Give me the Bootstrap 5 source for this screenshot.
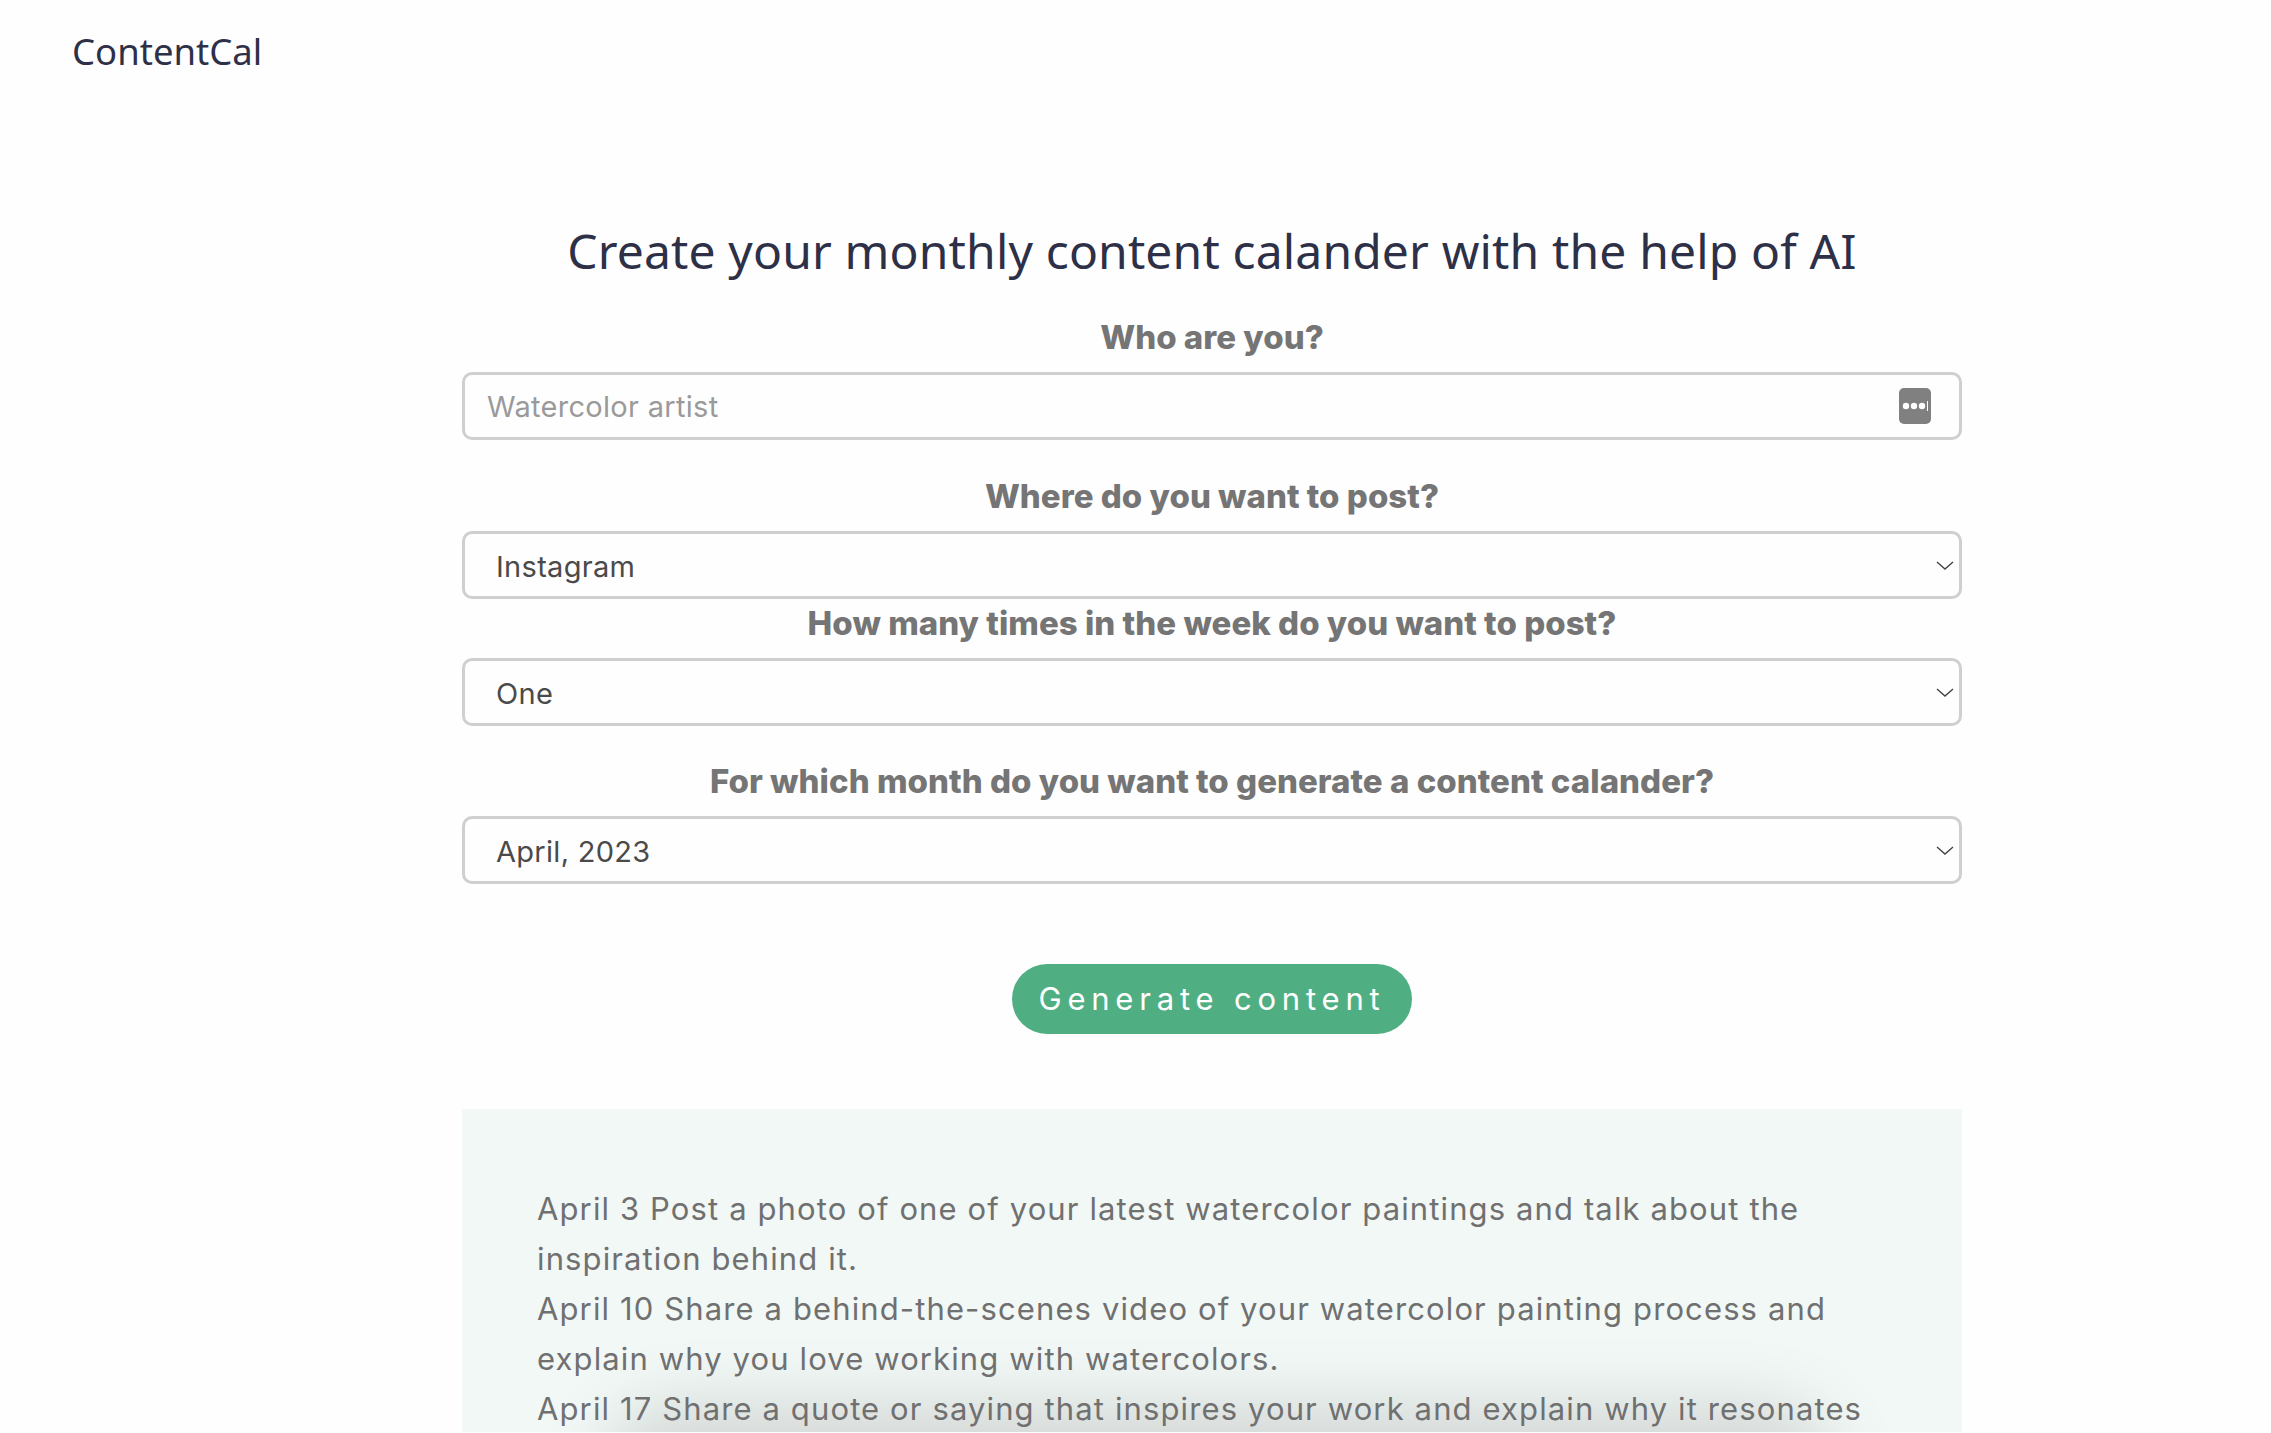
<!DOCTYPE html>
<html lang="en"><head><meta charset="utf-8"><title>ContentCal</title>
<link rel="stylesheet" href="https://cdn.jsdelivr.net/npm/bootstrap@5.3.0/dist/css/bootstrap.min.css">
<style>
html,body{height:100%;overflow:hidden;background:#fefefe}
body{font-family:"Inter","Noto Sans",sans-serif;color:#707070}
.cc-brand{font-family:"Noto Sans",sans-serif;font-size:36.5px;line-height:1;color:#2d3047;padding:33px 0 0 72px;height:100px}
.cc-wrap{width:1500px;margin-left:462px}
.cc-title{font-family:"Noto Sans",sans-serif;font-weight:400;font-size:48px;letter-spacing:.15px;line-height:70px;color:#2d3047;text-align:center;margin:116px 0 27px}
.cc-label{font-family:"Inter",sans-serif;font-weight:800;font-size:33px;letter-spacing:.03px;line-height:48px;color:#757575;text-align:center;margin:0 0 11px}
.cc-input.form-control,.cc-select.form-select{height:68px;border:3px solid #cfcfcf;border-radius:10px;background-color:#fefefe;font-size:29px;letter-spacing:.3px;color:#4a4a4a;box-shadow:none;margin:0}
.cc-input.form-control{padding:0 22px}
.cc-input.form-control::placeholder{color:#9a9a9a;opacity:1}
.cc-select.form-select{padding:3px 60px 0 31px;background-position:right 5px center;background-size:18px 9px;background-image:url("data:image/svg+xml,%3csvg xmlns='http://www.w3.org/2000/svg' viewBox='0 0 18 9'%3e%3cpath fill='none' stroke='%23444' stroke-width='1.4' d='M1 1l8 7 8-7'/%3e%3c/svg%3e")}
.cc-gap.position-relative{margin-bottom:32px}
.cc-select.form-select.cc-gap{margin-bottom:31px}
.cc-mgr{right:31px;top:16px;width:32px;height:36px;background:#808080;border-radius:5px}
.cc-go.btn{width:400px;height:70px;margin:80px 0 75px;background:#50af82;border:0;color:#fff;font-size:31px;letter-spacing:5.8px;padding:0}
.cc-panel{background:#f2f8f6;padding:75px 75px 0;height:323px;font-size:31px;letter-spacing:1.12px;line-height:50px;color:#707070;overflow:hidden}
.cc-blob{left:185px;right:170px;top:340px;height:60px;background:rgba(0,0,0,.13);box-shadow:0 0 70px 45px rgba(0,0,0,.13);border-radius:30px}
.cc-copy{z-index:1}
</style></head><body>
<div class="cc-brand">ContentCal</div>
<main class="cc-wrap">
<h1 class="cc-title">Create your monthly content calander with the help of AI</h1>
<div class="cc-label">Who are you?</div>
<div class="position-relative cc-gap">
<input class="form-control cc-input" type="text" placeholder="Watercolor artist">
<span class="cc-mgr position-absolute d-flex align-items-center justify-content-center"><svg width="28" height="10" viewBox="0 0 28 10"><circle cx="5" cy="5" r="3.2" fill="#fff"/><circle cx="13" cy="5" r="3.2" fill="#fff"/><circle cx="21" cy="5" r="3.2" fill="#fff"/><rect x="26" y="0" width="1" height="10" fill="#fff"/></svg></span>
</div>
<div class="cc-label">Where do you want to post?</div>
<select class="form-select cc-select"><option>Instagram</option></select>
<div class="cc-label">How many times in the week do you want to post?</div>
<select class="form-select cc-select cc-gap"><option>One</option></select>
<div class="cc-label">For which month do you want to generate a content calander?</div>
<select class="form-select cc-select"><option>April, 2023</option></select>
<div class="text-center"><button class="btn rounded-pill cc-go">Generate content</button></div>
<section class="cc-panel position-relative"><div class="cc-blob position-absolute"></div><div class="cc-copy position-relative">April 3 Post a photo of one of your latest watercolor paintings and talk about the inspiration behind it.<br>April 10 Share a behind-the-scenes video of your watercolor painting process and explain why you love working with watercolors.<br>April 17 Share a quote or saying that inspires your work and explain why it resonates</div></section>
</main>
</body></html>
